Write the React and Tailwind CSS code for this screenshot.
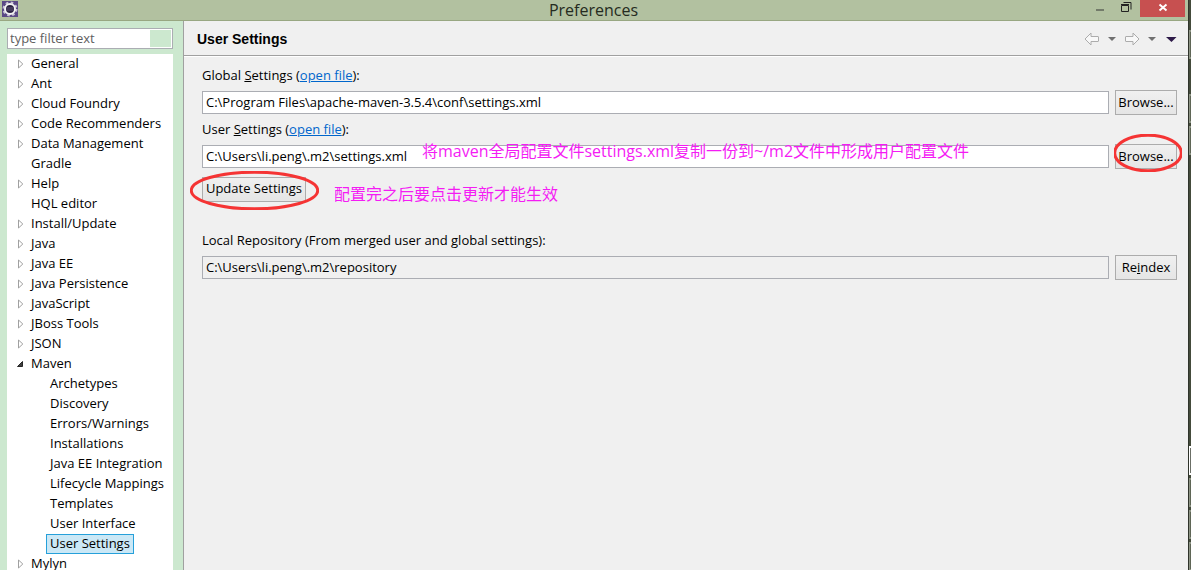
const tree = [
  ["General", "closed"], ["Ant", "closed"], ["Cloud Foundry", "closed"], ["Code Recommenders", "closed"],
  ["Data Management", "closed"], ["Gradle", ""], ["Help", "closed"], ["HQL editor", ""],
  ["Install/Update", "closed"], ["Java", "closed"], ["Java EE", "closed"], ["Java Persistence", "closed"],
  ["JavaScript", "closed"], ["JBoss Tools", "closed"], ["JSON", "closed"],
  ["Maven", "open", ["Archetypes", "Discovery", "Errors/Warnings", "Installations", "Java EE Integration", "Lifecycle Mappings", "Templates", "User Interface", "User Settings"]],
  ["Mylyn", "closed"],
];

function Twisty({ state }) {
  return (
    <svg className="h-5 w-5 shrink-0" viewBox="0 0 20 20" aria-hidden="true">
      {state === "closed" && <path d="M8.500 6v8l4.300-4z" fill="#fff" stroke="#a0a0a0" />}
      {state === "open" && <path d="M7.500 12.500h5v-5z" fill="#404040" stroke="#262626" />}
    </svg>
  );
}

function EclipseIcon() {
  return (
    <svg className="h-4 w-4" viewBox="0 0 16 16" aria-hidden="true">
      <rect width="16" height="16" fill="#5b4a86" />
      <circle cx="8" cy="8" r="6.500" fill="none" stroke="#c9c4d4" strokeWidth="2" strokeDasharray="2.600 2.500" />
      <circle cx="8" cy="8" r="5" fill="#2a2240" stroke="#f4f4f4" strokeWidth="2" />
      <path d="M4.500 7h7M4.500 9h7" stroke="#5e5478" />
    </svg>
  );
}

function Caret({ fill }) {
  return <svg className="h-4 w-4" viewBox="0 0 16 16" aria-hidden="true"><path d="M4 6h8l-4 4z" fill={fill} /></svg>;
}

function MenuCaret() {
  return <svg className="h-4 w-4" viewBox="0 0 16 16" aria-hidden="true"><path d="M2 6h10.500l-5 5z" fill="#2d1a48" /></svg>;
}

function Arrow({ right }) {
  return (
    <svg className="h-4 w-4" viewBox="0 0 16 16" aria-hidden="true">
      <path d={right ? "M15 8L9 2V5.500H2Q1.500 5.500 1.500 6v4q0 .5.5.5H9V14z" : "M1 8L7 2V5.500H14Q14.500 5.500 14.500 6v4q0 .5-.5.5H7V14z"} fill="#f8f8f8" stroke="#acacac" />
    </svg>
  );
}

function Ring({ className }) {
  return (
    <svg className={className} viewBox="0 0 100 100" preserveAspectRatio="none" aria-hidden="true">
      <ellipse cx="50" cy="50" rx="49" ry="47" fill="none" stroke="#f53434" strokeWidth="3" vectorEffect="non-scaling-stroke" />
    </svg>
  );
}

const button = "h-[25px] w-full border border-[#acacac] bg-linear-to-b from-[#f0f0f0] to-[#e5e5e5] pb-0.5 text-center whitespace-nowrap";
const field = "h-[23px] w-full min-w-0 border border-[#abadb3] px-[3px] pb-0.5 outline-none";
const row = "grid grid-cols-[minmax(0,1fr)_62px] items-center gap-x-1.5";
const thumb = "h-[29px] shrink-0 border-y-2 border-l border-[#8d9484] bg-[#5f6656]";

export default function App() {
  return (
    <div className="flex h-screen overflow-hidden bg-[#444b3b] font-['Open_Sans','Noto_Sans_CJK_SC',sans-serif] text-[13px] leading-5 text-black">
      <div className="flex min-w-0 flex-1 flex-col">
        <header className="flex h-[21px] shrink-0 items-start border-b border-[#98a782] bg-[#b2c1a0]">
          <div className="flex flex-1 pt-px pl-0.5"><EclipseIcon /></div>
          <h1 className="text-base leading-5 text-[#252b20]">Preferences</h1>
          <div className="flex flex-1 justify-end pr-[3px]">
            <button aria-label="Minimize" className="h-[17px] w-7">
              <svg className="h-[17px] w-7" viewBox="0 0 28 17"><path d="M11 10h8" stroke="#737b6a" strokeWidth="2" /></svg>
            </button>
            <button aria-label="Restore" className="h-[17px] w-[27px]">
              <svg className="h-[17px] w-[27px]" viewBox="0 0 27 17" fill="none" stroke="#222"><path d="M8.500 5.500h7v6h-7zM8 4.500h8" /><path d="M10.500 2.500h7.500V9.500" /></svg>
            </button>
            <button aria-label="Close" className="h-[17px] w-[45px] bg-[#c75050]">
              <svg className="h-[17px] w-[45px]" viewBox="0 0 45 17"><path d="M19.500 4.500l7 6M26.500 4.500l-7 6" stroke="#fff" strokeWidth="2" /></svg>
            </button>
          </div>
        </header>
        <div className="flex min-h-0 flex-1">
          <aside className="flex w-46 shrink-0 flex-col border-r border-[#a0a0a0] bg-[#cce8cf] pt-[7px] pr-2.5 pl-[7px]">
            <div className="flex h-[21px] shrink-0 border border-[#abadb3] bg-white p-px">
              <input aria-label="Filter" placeholder="type filter text" className="min-w-0 flex-1 px-px pb-px outline-none placeholder:text-[#606060]" />
              <span className="w-[21px] bg-[#cce8cf]" />
            </div>
            <ul className="mt-[5px] min-h-0 flex-1 overflow-hidden bg-white pl-[3px]">
              {tree.map(([name, state, children]) => (
                <li key={name}>
                  <div className="flex h-5 gap-px"><Twisty state={state} /><span className="leading-[18px]">{name}</span></div>
                  {children && (
                    <ul className="pl-9">
                      {children.map((child) => (
                        <li key={child} className="flex h-5">
                          <span className={child === "User Settings" ? "border border-[#26a0da] bg-[#cbe8f6] px-[3px] leading-4 whitespace-nowrap" : "border border-transparent px-[3px] leading-4 whitespace-nowrap"}>{child}</span>
                        </li>
                      ))}
                    </ul>
                  )}
                </li>
              ))}
            </ul>
          </aside>
          <main className="min-w-0 flex-1 bg-[#f0f0f0]">
            <div className="flex h-[35px] items-center justify-between border-b border-[#a0a0a0] pr-2 pl-[13px]">
              <h2 className="pt-0.5 font-['Liberation_Sans',sans-serif] text-sm font-bold">User Settings</h2>
              <div className="flex items-center gap-1 pt-px">
                <button aria-label="Back"><Arrow /></button>
                <button aria-label="Back history"><Caret fill="#707070" /></button>
                <button aria-label="Forward"><Arrow right /></button>
                <button aria-label="Forward history"><Caret fill="#707070" /></button>
                <button aria-label="View menu"><MenuCaret /></button>
              </div>
            </div>
            <form className="border-t border-white px-[18px] pt-2 pr-[11px]" onSubmit={(e) => e.preventDefault()}>
              <p><label htmlFor="global">Global <u>S</u>ettings</label> (<a href="#global" className="text-[#0066cc] underline">open file</a>):</p>
              <div className={row + " mt-[5px]"}>
                <input id="global" className={field + " bg-white"} defaultValue="C:\Program Files\apache-maven-3.5.4\conf\settings.xml" />
                <button type="button" className={button}>Browse...</button>
              </div>
              <p className="mt-1"><label htmlFor="user">User <u>S</u>ettings</label> (<a href="#user" className="text-[#0066cc] underline">open file</a>):</p>
              <div className={row + " mt-[5px]"}>
                <div className="relative">
                  <input id="user" className={field + " block bg-white"} defaultValue="C:\Users\li.peng\.m2\settings.xml" />
                  <span className="absolute -top-1 left-55 text-base leading-5 whitespace-nowrap text-[#f41cf4]">将maven全局配置文件settings.xml复制一份到~/m2文件中形成用户配置文件</span>
                </div>
                <div className="relative">
                  <button type="button" className={button + " block"}>Browse...</button>
                  <Ring className="absolute -top-2.5 -left-px h-[38px] w-[68px]" />
                </div>
              </div>
              <div className="mt-[5px] flex items-center">
                <div className="relative w-26">
                  <button type="button" className={button + " block"}>Update Settings</button>
                  <Ring className="absolute -top-1.5 -left-3 h-[39px] w-[129px]" />
                </div>
                <span className="ml-7 pt-2.5 text-base leading-5 whitespace-nowrap text-[#f41cf4]">配置完之后要点击更新才能生效</span>
              </div>
              <label htmlFor="repo" className="mt-[26px] block">Local Repository (From merged user and global settings):</label>
              <div className={row + " mt-[5px]"}>
                <input id="repo" readOnly className={field + " bg-[#f0f0f0]"} defaultValue="C:\Users\li.peng\.m2\repository" />
                <button type="button" className={button}>Re<u>i</u>ndex</button>
              </div>
            </form>
          </main>
        </div>
      </div>
      <div className="flex w-[3px] shrink-0 flex-col border-l border-[#2f342b] bg-[#444b3b] pt-[30px]">
        <div className={thumb} />
        <div className={thumb + " mt-[35px]"} />
        <div className={thumb + " mt-[3px]"} />
        <div className="mt-[291px] h-[29px] shrink-0 border-y-2 border-l border-white bg-[#6b6f66]" />
        <div className={thumb + " mt-[3px]"} />
        <div className={thumb + " mt-[3px]"} />
        <div className={thumb + " mt-[3px]"} />
      </div>
    </div>
  );
}
